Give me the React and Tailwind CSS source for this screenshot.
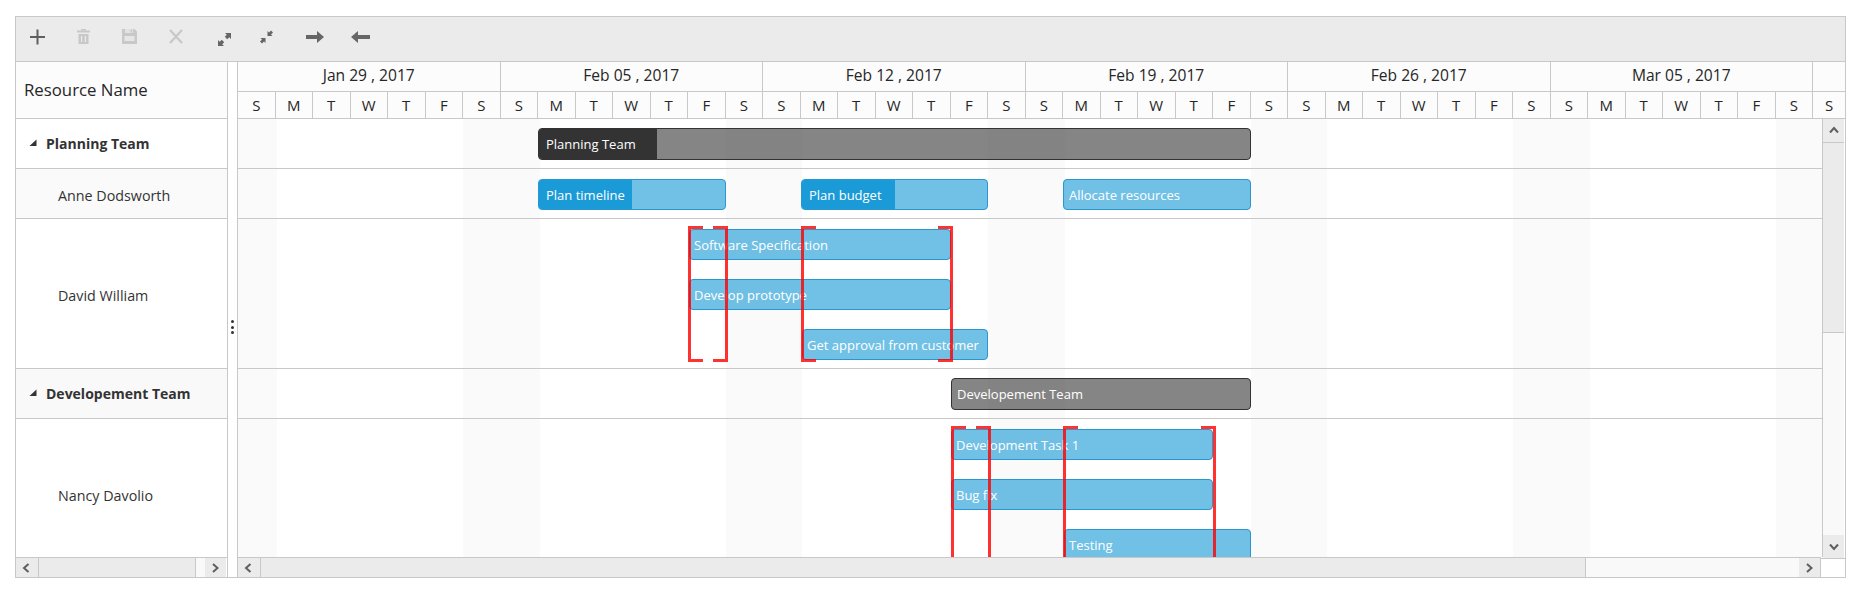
import React from 'react';

const weeks = ['Jan 29 , 2017', 'Feb 05 , 2017', 'Feb 12 , 2017', 'Feb 19 , 2017', 'Feb 26 , 2017', 'Mar 05 , 2017'];
const days = ['S', 'M', 'T', 'W', 'T', 'F', 'S'];

const leftRows = [
    { name: 'Planning Team', group: true, height: 'h-[50px]', bg: 'bg-white' },
    { name: 'Anne Dodsworth', height: 'h-[50px]', bg: 'bg-[#fafafa]' },
    { name: 'David William', height: 'h-[150px]', bg: 'bg-white' },
    { name: 'Developement Team', group: true, height: 'h-[50px]', bg: 'bg-[#f9f9f9]' },
    { name: 'Nancy Davolio', height: 'h-[150px]', bg: 'bg-white' },
];

const chartRows = [
    {
        height: 'h-[50px]',
        bars: [{ text: 'Planning Team', left: 300, width: 713, top: 9, summary: true, progress: 119, pad: 7 }],
    },
    {
        height: 'h-[50px]',
        bars: [
            { text: 'Plan timeline', left: 300, width: 188, top: 10, progress: 94, pad: 7 },
            { text: 'Plan budget', left: 563, width: 187, top: 10, progress: 94, pad: 7 },
            { text: 'Allocate resources', left: 825, width: 188, top: 10, pad: 5 },
        ],
    },
    {
        height: 'h-[150px]',
        bars: [
            { text: 'Software Specification', left: 451, width: 262, top: 10, pad: 4 },
            { text: 'Develop prototype', left: 451, width: 262, top: 60, pad: 4 },
            { text: 'Get approval from customer', left: 564, width: 186, top: 110, pad: 4 },
        ],
        marks: [{ left: 450, width: 40 }, { left: 563, width: 152 }],
    },
    {
        height: 'h-[50px]',
        bars: [{ text: 'Developement Team', left: 713, width: 300, top: 9, summary: true, pad: 5 }],
    },
    {
        height: 'h-[150px]',
        bars: [
            { text: 'Development Task 1', left: 713, width: 262, top: 10, pad: 4 },
            { text: 'Bug fix', left: 713, width: 262, top: 60, pad: 4 },
            { text: 'Testing', left: 826, width: 187, top: 110, pad: 4 },
        ],
        marks: [{ left: 713, width: 40 }, { left: 825, width: 153 }],
    },
];

function Bar({ bar }) {
    const pos = { left: bar.left, width: bar.width, top: bar.top };
    const tone = bar.summary
        ? 'h-[32px] border-[#333333] bg-[#333333]/60'
        : 'h-[31px] border-[#2b97d0] bg-[#1a9bd7]/62';
    return (
        <div className={`absolute overflow-hidden rounded-[4px] border ${tone}`} style={pos}>
            {bar.progress ? (
                <div
                    className={`absolute -left-px -top-px -bottom-px ${bar.summary ? 'bg-[#333333]' : 'bg-[#1a9bd7]'}`}
                    style={{ width: bar.progress }}
                />
            ) : null}
            <span className="relative flex h-full items-center whitespace-nowrap pt-[2px] text-[13px] text-white" style={{ paddingLeft: bar.pad }}>
                {bar.text}
            </span>
        </div>
    );
}

// red non-working range brackets, drawn over the bars
function Mark({ mark }) {
    return (
        <div className="absolute top-[7px] h-[136px] opacity-80" style={{ left: mark.left, width: mark.width }}>
            <div className="absolute inset-y-0 left-0 w-[3px] bg-[#ff0000]" />
            <div className="absolute inset-y-0 right-0 w-[3px] bg-[#ff0000]" />
            <div className="absolute left-0 top-0 h-[3px] w-[15px] bg-[#ff0000]" />
            <div className="absolute right-0 top-0 h-[3px] w-[15px] bg-[#ff0000]" />
            <div className="absolute bottom-0 left-0 h-[3px] w-[15px] bg-[#ff0000]" />
            <div className="absolute bottom-0 right-0 h-[3px] w-[15px] bg-[#ff0000]" />
        </div>
    );
}

function Chevron({ dir }) {
    const paths = {
        left: 'M6.5 1 L2 5 L6.5 9',
        right: 'M2 1 L6.5 5 L2 9',
        up: 'M1 6.5 L5 2 L9 6.5',
        down: 'M1 2.5 L5 7 L9 2.5',
    };
    return (
        <svg width="10" height="10" viewBox="0 0 10 10" fill="none">
            <path d={paths[dir]} stroke="#5f5f5f" strokeWidth="2" />
        </svg>
    );
}

function Toolbar() {
    return (
        <div className="flex h-[45px] items-start border-b border-[#c8c8c8] bg-[#ebebeb] pt-[12px]">
            <svg className="ml-[14px]" width="15" height="16" viewBox="0 0 15 16" fill="#5f5f5f">
                <rect x="0" y="7" width="15" height="2" />
                <rect x="6.5" y="0.5" width="2" height="15" />
            </svg>
            <svg className="ml-[32px]" width="13" height="15" viewBox="0 0 13 15" fill="#c8c8c8">
                <rect x="4" y="0" width="5" height="1.5" />
                <rect x="0" y="1.5" width="13" height="2" />
                <path d="M1.5 5 H11.5 V15 H1.5 Z M4 7 V13 H5.2 V7 Z M7.8 7 V13 H9 V7 Z" fillRule="evenodd" />
            </svg>
            <svg className="ml-[32px]" width="15" height="15" viewBox="0 0 15 15" fill="#c8c8c8">
                <path d="M0 0 H12.5 L15 2.5 V15 H0 Z" />
                <rect x="3" y="0" width="8" height="4" fill="#e2e2e2" />
                <rect x="8.5" y="0.5" width="1.5" height="3" fill="#c8c8c8" />
                <rect x="2.5" y="7" width="10" height="5" fill="#e6e6e6" />
            </svg>
            <svg className="ml-[32px]" width="14" height="15" viewBox="0 0 14 15" fill="none" stroke="#c8c8c8" strokeWidth="2.2">
                <path d="M1 1 L13 14 M13 1 L1 14" />
            </svg>
            <svg className="ml-[35px] mt-[4px]" width="13" height="13" viewBox="0 0 13 13" fill="#666666">
                <path d="M7 0 H13 V6 L11.2 4.2 L9.2 6.2 L6.8 3.8 L8.8 1.8 Z" />
                <path d="M6 13 H0 V7 L1.8 8.8 L3.8 6.8 L6.2 9.2 L4.2 11.2 Z" />
            </svg>
            <svg className="ml-[29px] mt-[1px]" width="13" height="14" viewBox="0 0 13 14" fill="#666666">
                <path d="M7.5 1 L9 2.5 L11 0.5 L13 2.5 L11 4.5 L12.5 6 H7.5 Z" />
                <path d="M5.5 13 L4 11.5 L2 13.5 L0 11.5 L2 9.5 L0.5 8 H5.5 Z" />
            </svg>
            <svg className="ml-[33px] mt-[2px]" width="18" height="12" viewBox="0 0 18 12" fill="#666666">
                <path d="M0 4 H11 V0 L18 6 L11 12 V8 H0 Z" />
            </svg>
            <svg className="ml-[27px] mt-[2px]" width="19" height="12" viewBox="0 0 19 12" fill="#666666">
                <path d="M19 4 H7 V0 L0 6 L7 12 V8 H19 Z" />
            </svg>
        </div>
    );
}

function LeftPanel() {
    return (
        <div className="flex w-[212px] flex-col border-r border-[#c8c8c8]">
            <div className="flex h-[57px] items-center border-b border-[#c8c8c8] bg-[#fcfcfc] pl-[8px] text-[16.8px] font-medium text-[#262626]">
                Resource Name
            </div>
            <div className="flex-1 overflow-hidden">
                {leftRows.map((row, i) => (
                    <div className={`flex items-center border-b border-[#c8c8c8] ${row.height} ${row.bg}`} key={i}>
                        {row.group ? (
                            <>
                                <svg className="ml-[13px] mb-[2px]" width="8" height="8" viewBox="0 0 8 8" fill="#333333">
                                    <polygon points="7.5,0.5 7.5,7 0.5,7" />
                                </svg>
                                <span className="ml-[9px] text-[14px] font-bold">{row.name}</span>
                            </>
                        ) : (
                            <span className="ml-[42px] pt-[4px] text-[14.3px]">{row.name}</span>
                        )}
                    </div>
                ))}
            </div>
            <div className="flex h-[20px] border-t border-[#c8c8c8] bg-[#ebebeb]">
                <div className="flex w-[23px] items-center justify-center border-r border-[#c8c8c8]"><Chevron dir="left" /></div>
                <div className="flex-1 border-r border-[#c8c8c8]" />
                <div className="w-[9px] bg-[#f9f9f9]" />
                <div className="flex w-[21px] items-center justify-center"><Chevron dir="right" /></div>
                <div className="w-px bg-white" />
            </div>
        </div>
    );
}

function TimelineHeader() {
    return (
        <div className="h-[57px] border-b border-[#c8c8c8] bg-[#fcfcfc] text-[#262626]">
            <div className="flex h-[30px] border-b border-[#c8c8c8]">
                {weeks.map(week => (
                    <div className="flex w-[262.5px] shrink-0 items-center justify-center border-r border-[#c8c8c8] pb-[1px] text-[15.6px] font-medium" key={week}>
                        {week}
                    </div>
                ))}
                <div className="flex-1" />
            </div>
            <div className="flex h-[26px]">
                {weeks.map(week => days.map((day, i) => (
                    <div className="flex w-[37.5px] shrink-0 items-center justify-center border-r border-[#c8c8c8] text-[15px]" key={week + i}>
                        {day}
                    </div>
                )))}
                <div className="flex flex-1 items-center justify-center text-[15px]">S</div>
            </div>
        </div>
    );
}

function WeekendStripes() {
    return (
        <div className="absolute inset-0 flex">
            <div className="w-[38.5px] shrink-0 bg-[#fafafa]" />
            <div className="w-[186.5px] shrink-0" />
            {weeks.map(week => (
                <React.Fragment key={week}>
                    <div className="w-[76.5px] shrink-0 bg-[#fafafa]" />
                    <div className="w-[186px] shrink-0" />
                </React.Fragment>
            ))}
        </div>
    );
}

function Chart() {
    return (
        <div className="relative flex-1 overflow-hidden bg-white">
            <WeekendStripes />
            {chartRows.map((row, i) => (
                <div className={`relative border-b border-[#c8c8c8] ${row.height}`} key={i}>
                    {row.bars.map(bar => <Bar bar={bar} key={bar.text} />)}
                    {(row.marks || []).map(mark => <Mark mark={mark} key={mark.left} />)}
                </div>
            ))}
        </div>
    );
}

function VerticalScroll() {
    return (
        <div className="flex w-[23px] flex-col border-l border-[#c8c8c8] pr-px">
            <div className="flex h-[24px] items-center justify-center border-b border-[#c8c8c8] bg-[#ebebeb]"><Chevron dir="up" /></div>
            <div className="h-[190px] border-b border-[#c8c8c8] bg-[#ebebeb]" />
            <div className="flex-1 bg-[#f9f9f9]" />
            <div className="-mb-px flex h-[23px] items-center justify-center bg-[#ebebeb]"><Chevron dir="down" /></div>
        </div>
    );
}

function HorizontalScroll() {
    return (
        <div className="flex h-[20px]">
            <div className="flex flex-1 border-t border-r border-[#c8c8c8]">
                <div className="flex w-[23px] items-center justify-center border-r border-[#c8c8c8] bg-[#ebebeb]"><Chevron dir="left" /></div>
                <div className="w-[1325px] border-r border-[#c8c8c8] bg-[#ebebeb]" />
                <div className="flex-1 bg-[#f9f9f9]" />
                <div className="flex w-[21px] items-center justify-center bg-[#ebebeb]"><Chevron dir="right" /></div>
            </div>
            <div className="mt-px w-[24px] border-t border-[#c8c8c8] bg-white" />
        </div>
    );
}

export default function App() {
    return (
        <div className="h-[606px] bg-white pl-[15px] pt-[16px] font-['Open_Sans','Noto_Sans',sans-serif] text-[#333333]">
            <div className="flex h-[562px] w-[1831px] flex-col border border-[#c8c8c8]">
                <Toolbar />
                <div className="flex min-h-0 flex-1">
                    <LeftPanel />
                    {/* splitter */}
                    <div className="flex w-[10px] flex-col items-center border-r border-[#c8c8c8] bg-white pr-px pt-[258px]">
                        <div className="h-[3px] w-[3px] rounded-full bg-[#333333]" />
                        <div className="mt-[2.5px] h-[3px] w-[3px] rounded-full bg-[#333333]" />
                        <div className="mt-[2.5px] h-[3px] w-[3px] rounded-full bg-[#333333]" />
                    </div>
                    <div className="flex w-[1607px] flex-col">
                        <TimelineHeader />
                        <div className="flex min-h-0 flex-1">
                            <Chart />
                            <VerticalScroll />
                        </div>
                        <HorizontalScroll />
                    </div>
                </div>
            </div>
        </div>
    );
}
